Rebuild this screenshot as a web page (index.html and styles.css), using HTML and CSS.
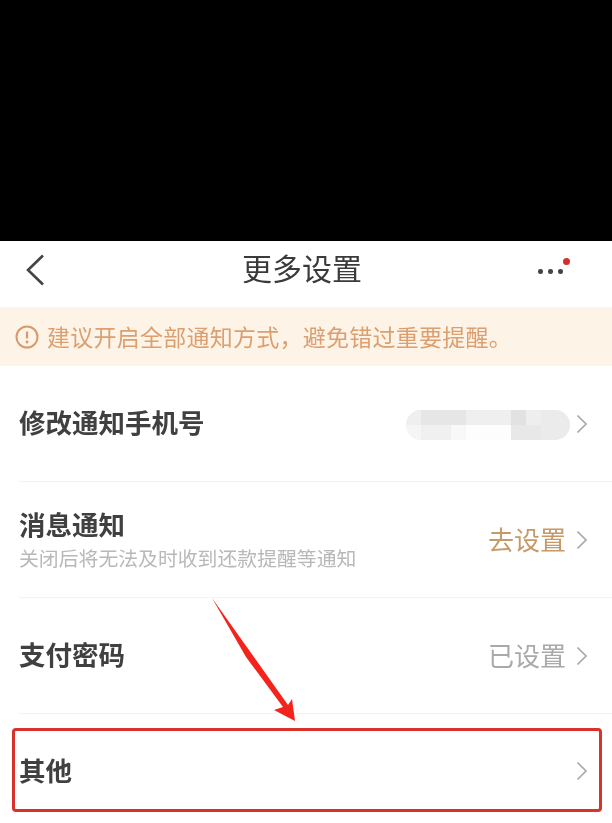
FILE: index.html
```html
<!DOCTYPE html>
<html lang="zh">
<head>
<meta charset="utf-8">
<title>更多设置</title>
<link rel="stylesheet" href="styles.css">
</head>
<body>
<div class="top-black"></div>
<main class="screen">
  <header class="nav">
    <svg class="back" viewBox="0 0 20 32" width="20" height="32"><path d="M18 1.500 3 16l15 14.500" fill="none" stroke="#444" stroke-width="2.600"/></svg>
    <h1 class="title">更多设置</h1>
    <div class="more">
      <span class="dot"></span><span class="dot"></span><span class="dot"></span>
      <span class="badge"></span>
    </div>
  </header>
  <div class="notice">
    <svg class="notice-icon" viewBox="0 0 24 24" width="24" height="24"><circle cx="12" cy="12" r="10.500" fill="none" stroke="#d69a6c" stroke-width="2"/><path d="M12 6.500v7" stroke="#d69a6c" stroke-width="2.200" fill="none"/><circle cx="12" cy="17" r="1.400" fill="#d69a6c"/></svg>
    <span class="notice-text">建议开启全部通知方式，避免错过重要提醒。</span>
  </div>
  <section class="list">
    <div class="row">
      <div class="main"><div class="label">修改通知手机号</div></div>
      <div class="mosaic">
        <i class="m1"></i><i class="m2"></i><i class="m3"></i><i class="m4"></i><i class="m5"></i><i class="m6"></i>
        <i class="m7"></i><i class="m8"></i><i class="m9"></i><i class="m10"></i><i class="m11"></i><i class="m12"></i>
      </div>
      <svg class="chev" viewBox="0 0 12 20" width="12" height="20"><path d="M1.500 1.500 10 10l-8.500 8.500" fill="none" stroke="#a9a9a9" stroke-width="1.700"/></svg>
    </div>
    <div class="row">
      <div class="main">
        <div class="label">消息通知</div>
        <div class="sub">关闭后将无法及时收到还款提醒等通知</div>
      </div>
      <span class="value gold">去设置</span>
      <svg class="chev" viewBox="0 0 12 20" width="12" height="20"><path d="M1.500 1.500 10 10l-8.500 8.500" fill="none" stroke="#a9a9a9" stroke-width="1.700"/></svg>
    </div>
    <div class="row">
      <div class="main"><div class="label">支付密码</div></div>
      <span class="value grey">已设置</span>
      <svg class="chev" viewBox="0 0 12 20" width="12" height="20"><path d="M1.500 1.500 10 10l-8.500 8.500" fill="none" stroke="#a9a9a9" stroke-width="1.700"/></svg>
    </div>
    <div class="row">
      <div class="main"><div class="label">其他</div></div>
      <svg class="chev" viewBox="0 0 12 20" width="12" height="20"><path d="M1.500 1.500 10 10l-8.500 8.500" fill="none" stroke="#a9a9a9" stroke-width="1.700"/></svg>
    </div>
  </section>
  <div class="highlight"></div>
  <svg class="arrow" viewBox="0 0 100 140" width="100" height="140"><path d="M12 8 L88 115 L92 109 L95 131 L74 120 L83 117 L46 67 Z" fill="#f3241c"/></svg>
</main>
</body>
</html>
```
FILE: styles.css
```css
* { box-sizing: border-box; margin: 0; padding: 0; }
html, body { width: 612px; height: 823px; overflow: hidden; background: #fff; }
body { font-family: "Noto Sans CJK SC", "Liberation Sans", sans-serif; color: #333; }
.top-black { height: 241px; background: #000; }
.screen { position: relative; height: 582px; background: #fff; filter: blur(0.5px); }
.nav { height: 66px; display: flex; align-items: center; justify-content: center; position: relative; }
.back { position: absolute; left: 25px; top: 13px; }
.title { font-size: 30px; font-weight: 400; color: #3a3a3a; line-height: 1; margin: -14px 8px 0 0; }
.more { position: absolute; left: 538px; top: 28px; display: flex; gap: 5.500px; }
.dot { width: 4.500px; height: 4.500px; border-radius: 50%; background: #444; }
.badge { position: absolute; left: 25px; top: -11px; width: 7px; height: 7px; border-radius: 50%; background: #d2302a; }
.notice { height: 59px; background: #fdf3e6; display: flex; align-items: center; padding-left: 15px; gap: 9px; }
.notice-icon { flex: none; }
.notice-text { font-size: 23px; letter-spacing: 0.250px; color: #dc9f6f; line-height: 1; margin-left: -1px; }
.list { padding-left: 19px; }
.row { height: 116px; display: flex; align-items: center; border-bottom: 1px solid #f3f3f3; padding-right: 24px; }
.row:last-child { border-bottom: 0; height: 114px; }
.main { flex: 1; min-width: 0; margin-bottom: 3px; }
.label { font-size: 26.500px; font-weight: 700; color: #404040; line-height: 36px; }
.sub { font-size: 19.850px; color: #b8b8b8; line-height: 26px; margin-top: 3px; }
.value { font-size: 26px; line-height: 1; margin: 0 10px 2px 0; }
.gold { color: #c59a68; }
.grey { color: #a9a9a9; }
.chev { flex: none; }
.mosaic { width: 164px; height: 30px; border-radius: 15px; overflow: hidden; display: grid; grid-template-columns: 15px 30px 15px 45px 15px 15px 29px; grid-template-rows: 15px 15px; margin: 2px 6px 0 0; background: #f2f2f2; }
.m1 { background: #efefef; grid-column: 1; grid-row: 1; }
.m2 { background: #e6e6e6; grid-column: 2 / 4; grid-row: 1; }
.m3 { background: #efefef; grid-column: 4; grid-row: 1; }
.m4 { background: #e2e2e2; grid-column: 5; grid-row: 1; }
.m5 { background: #eeeeee; grid-column: 6; grid-row: 1; }
.m6 { background: #ebebeb; grid-column: 7; grid-row: 1; }
.m7 { background: #f5f5f5; grid-column: 1; grid-row: 2; }
.m8 { background: #f0f0f0; grid-column: 2; grid-row: 2; }
.m9 { background: #f8f8f8; grid-column: 3; grid-row: 2; }
.m10 { background: #fdfdfd; grid-column: 4; grid-row: 2; }
.m11 { background: #e8e8e8; grid-column: 5 / 7; grid-row: 2; }
.m12 { background: #ebebeb; grid-column: 7; grid-row: 2; }
.highlight { position: absolute; left: 12px; top: 487px; width: 590px; height: 84px; border: 3px solid #d8322a; border-radius: 4px; }
.arrow { position: absolute; left: 200px; top: 349px; overflow: visible; }
```
